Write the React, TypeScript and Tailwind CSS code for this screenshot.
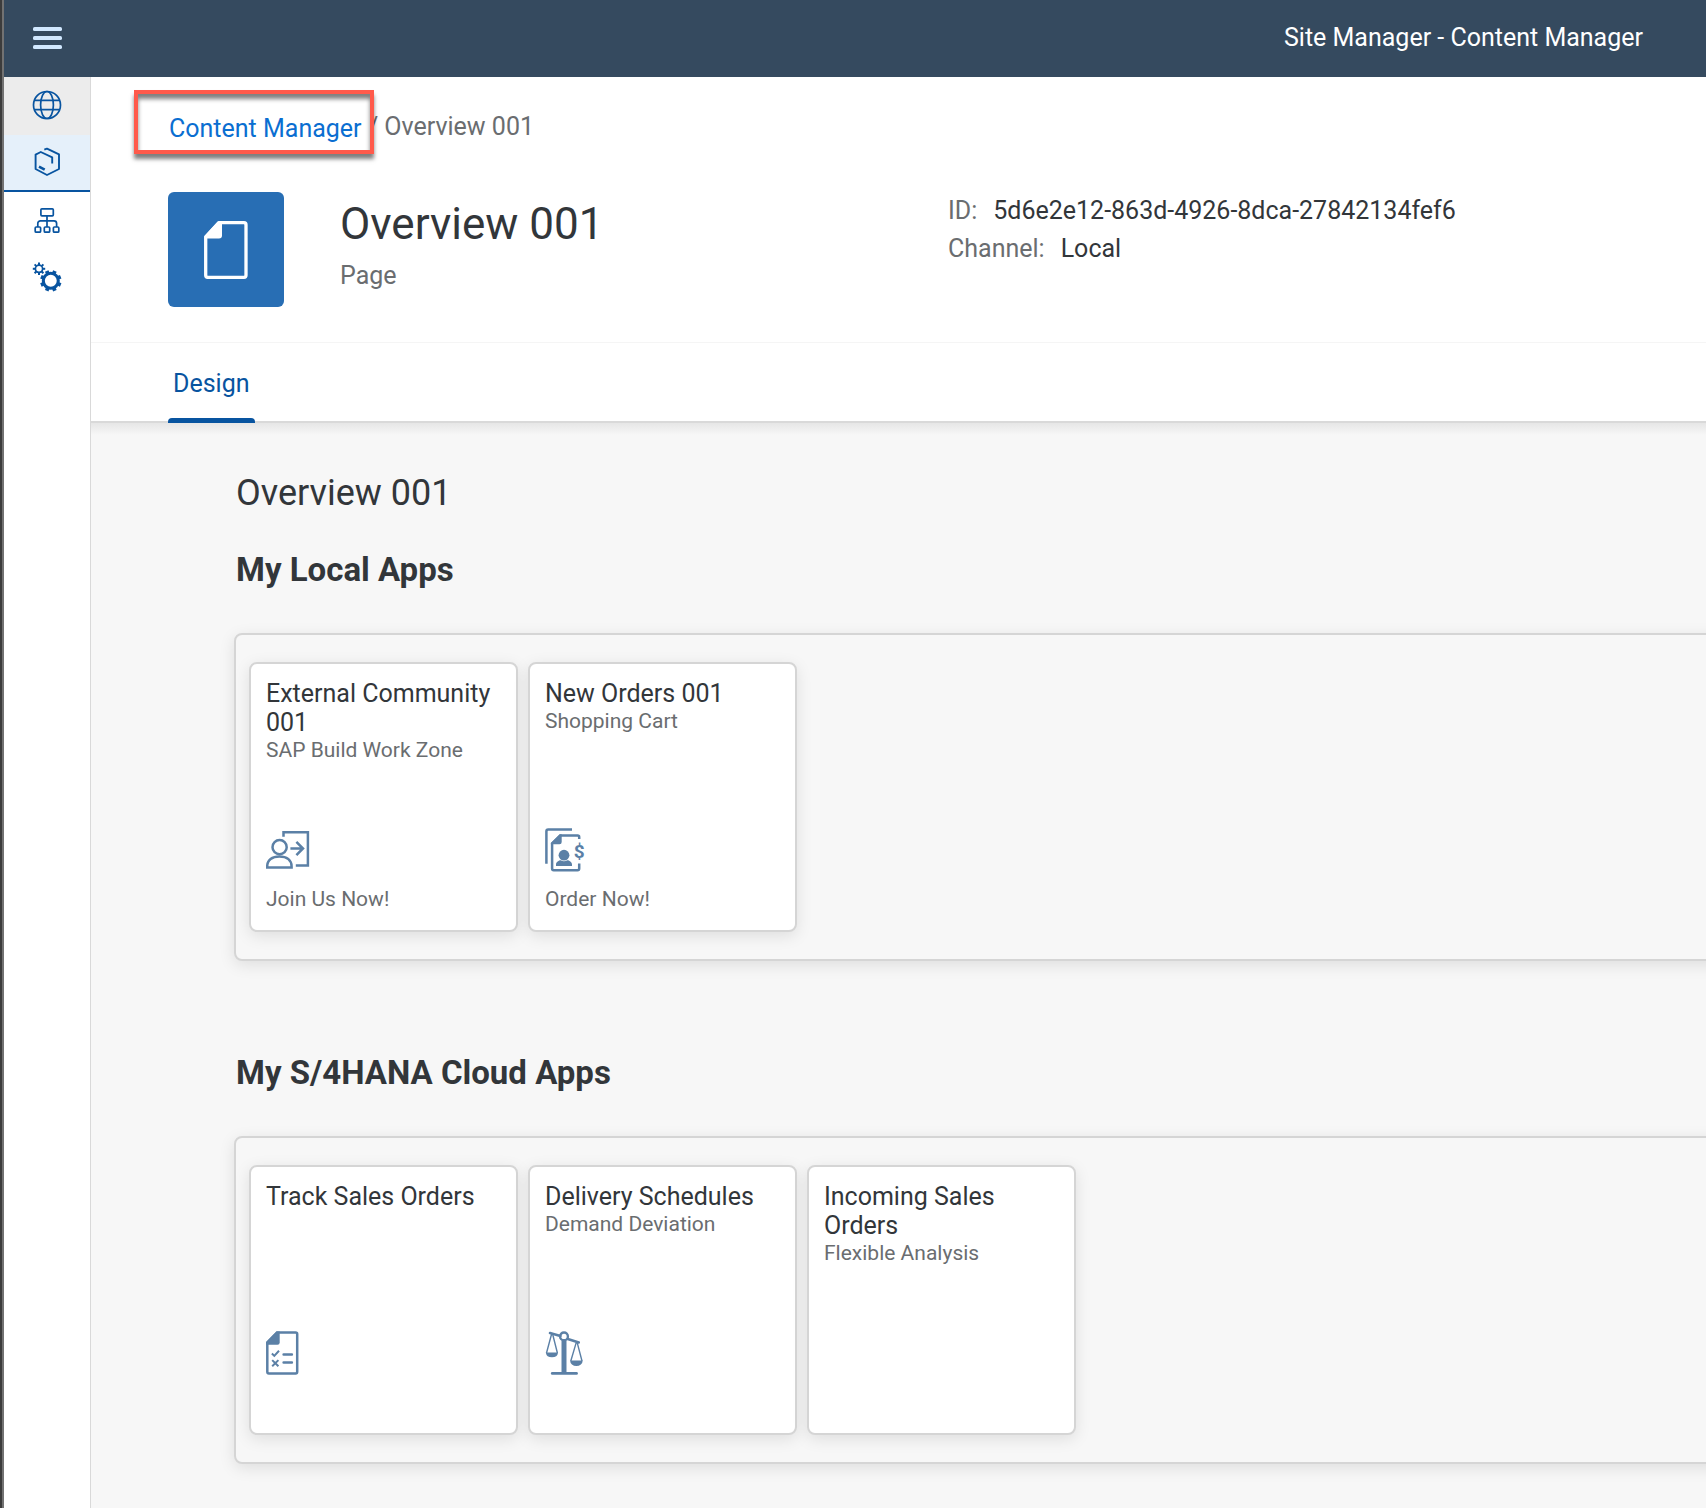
import type { ReactNode } from "react";

function MenuIcon() {
  return (
    <svg width="30" height="24" viewBox="0 0 30 24" fill="#d1e8ff" aria-hidden="true">
      <rect x="1" y="1" width="29" height="4" rx="1.6" />
      <rect x="1" y="10" width="29" height="4" rx="1.6" />
      <rect x="1" y="19" width="29" height="4" rx="1.6" />
    </svg>
  );
}

function GlobeIcon() {
  return (
    <svg width="30" height="30" viewBox="0 0 30 30" fill="none" stroke="#0854a0" strokeWidth="1.7" aria-hidden="true">
      <circle cx="15" cy="15" r="13.5" />
      <ellipse cx="15" cy="15" rx="6.4" ry="13.5" />
      <path d="M2.2 10.3H27.8M2.2 19.6H27.8" />
    </svg>
  );
}

function ContentIcon() {
  return (
    <svg width="30" height="30" viewBox="0 0 30 30" fill="none" stroke="#0854a0" strokeWidth="1.9" aria-hidden="true">
      <path d="M12.3 2.6 L15 1.6 L27 7.4 V22 L15 28 L3.6 22 V7.6 L8.8 5 L20.2 10.3 V16.4" strokeLinejoin="round" />
      <path d="M7 19.6 L12.7 22.6" strokeWidth="2.6" />
    </svg>
  );
}

function HierarchyIcon() {
  return (
    <svg width="30" height="30" viewBox="0 0 30 30" fill="none" stroke="#0854a0" strokeWidth="1.7" aria-hidden="true">
      <rect x="8.9" y="3.8" width="12.4" height="7" rx="1" />
      <path d="M15 11V22M5.8 22V18.4a2.6 2.6 0 0 1 2.6-2.6H22a2.6 2.6 0 0 1 2.6 2.6V22" />
      <rect x="3.2" y="22" width="5.4" height="5.2" rx="1" />
      <rect x="12.3" y="22" width="5.4" height="5.2" rx="1" />
      <rect x="21.4" y="22" width="5.4" height="5.2" rx="1" />
    </svg>
  );
}

function GearsIcon() {
  const teeth = [0, 45, 90, 135, 180, 225, 270, 315];
  return (
    <svg width="30" height="30" viewBox="0 0 30 30" aria-hidden="true">
      <g stroke="#0854a0" fill="none">
        <circle cx="7" cy="6.8" r="3.6" strokeWidth="1.7" />
        {teeth.map((a) => (
          <path key={a} d="M7 3V.6" strokeWidth="2" transform={`rotate(${a} 7 6.8)`} />
        ))}
        <circle cx="18.8" cy="18.8" r="7.5" strokeWidth="3.1" />
        {teeth.map((a) => (
          <path key={a} d="M18.8 11V8.1" strokeWidth="3.8" transform={`rotate(${a + 22.5} 18.8 18.8)`} />
        ))}
      </g>
    </svg>
  );
}

function PageIcon() {
  return (
    <svg width="44" height="58" viewBox="0 0 44 58" aria-hidden="true">
      <path d="M14.8 1.7H40a2 2 0 0 1 2 2V54.3a2 2 0 0 1-2 2H3.7a2 2 0 0 1-2-2V15.8Z" fill="none" stroke="#fff" strokeWidth="3.3" strokeLinejoin="round" />
      <path d="M14 .5H18V14.5a3 3 0 0 1-3 3H.6V15Z" fill="#fff" />
    </svg>
  );
}

function JoinIcon() {
  return (
    <svg width="44" height="44" viewBox="0 0 44 44" fill="none" stroke="#5b80a6" strokeWidth="2.5" aria-hidden="true">
      <circle cx="13.6" cy="19.2" r="7.1" />
      <path d="M1.2 39.6V38.4C1.2 32 6.2 28.4 13.4 28.4S25.6 32 25.6 38.4V39.6Z" />
      <path d="M17.5 8.8V4.2H41.9V37.4H29.8" />
      <path d="M24.4 20.5H36.5M30.4 13.9L37 20.5L30.4 27.1" />
    </svg>
  );
}

function SalesDocumentIcon() {
  return (
    <svg width="44" height="44" viewBox="0 0 44 44" fill="none" stroke="#5b80a6" strokeWidth="2.5" aria-hidden="true">
      <path d="M1.4 35.8V3.4A1.8 1.8 0 0 1 3.2 1.6H27" />
      <path d="M34.2 11V9A1.6 1.6 0 0 0 32.6 7.4H15.4L7.1 15.6V40.6A1.6 1.6 0 0 0 8.7 42.2H32.6A1.6 1.6 0 0 0 34.2 40.6V35.6" />
      <path d="M14.6 6.2H16.7V14A2.2 2.2 0 0 1 14.5 16.2H5.9V15Z" fill="#5b80a6" stroke="none" />
      <circle cx="19" cy="27.2" r="5.4" fill="#5b80a6" stroke="none" />
      <path d="M11 38.1V36.6C11 34 14 32.3 15.6 32.3Q19 34.4 22.4 32.3C24 32.3 27 34 27 36.6V38.1Z" fill="#5b80a6" stroke="none" />
      <text x="34.3" y="30" textAnchor="middle" fontFamily="Roboto, sans-serif" fontSize="19" fontWeight="700" fill="#5b80a6" stroke="none">$</text>
    </svg>
  );
}

function ChecklistIcon() {
  return (
    <svg width="44" height="44" viewBox="0 0 44 44" fill="none" stroke="#5b80a6" strokeWidth="2.5" aria-hidden="true">
      <path d="M11 1.5H29.6A1.6 1.6 0 0 1 31.2 3.1V40.8A1.6 1.6 0 0 1 29.6 42.4H2.9A1.6 1.6 0 0 1 1.3 40.8V11.4Z" />
      <path d="M10.6 .4H13.7V11.6A2.2 2.2 0 0 1 11.5 13.8H.1V11Z" fill="#5b80a6" stroke="none" />
      <path d="M5.9 22.5L8.3 24.9L13 19.8M6.2 29.1L12.4 35.3M12.4 29.1L6.2 35.3" strokeWidth="2" />
      <path d="M17.6 23.4H25.9M17.6 31.4H25.9" strokeLinecap="round" />
    </svg>
  );
}

function ScaleIcon() {
  return (
    <svg width="44" height="44" viewBox="0 0 44 44" fill="none" stroke="#5b80a6" aria-hidden="true">
      <circle cx="19" cy="5.4" r="3.9" strokeWidth="2.4" />
      <path d="M5 2.1L15.4 4.9M22.8 8.1L33.8 11.4" strokeWidth="2.6" strokeLinecap="round" />
      <path d="M19 9.4V42" strokeWidth="5" />
      <path d="M7.2 42.4H31.6" strokeWidth="2.6" strokeLinecap="round" />
      <path d="M6.6 3L1.5 22M7.6 3L12.4 22M31.2 11.6L25.8 30M32.2 11.6L37 30" strokeWidth="1.4" />
      <path d="M.8 21.4H13.1A6.2 5.6 0 0 1 .8 21.4ZM25.1 29.6H37.7A6.3 5.4 0 0 1 25.1 29.6Z" fill="#5b80a6" stroke="none" />
    </svg>
  );
}

type App = { title: string; subtitle?: string; footer?: string; icon?: ReactNode };

const groups: { name: string; apps: App[] }[] = [
  {
    name: "My Local Apps",
    apps: [
      { title: "External Community 001", subtitle: "SAP Build Work Zone", footer: "Join Us Now!", icon: <JoinIcon /> },
      { title: "New Orders 001", subtitle: "Shopping Cart", footer: "Order Now!", icon: <SalesDocumentIcon /> },
    ],
  },
  {
    name: "My S/4HANA Cloud Apps",
    apps: [
      { title: "Track Sales Orders", icon: <ChecklistIcon /> },
      { title: "Delivery Schedules", subtitle: "Demand Deviation", icon: <ScaleIcon /> },
      { title: "Incoming Sales Orders", subtitle: "Flexible Analysis" },
    ],
  },
];

function Tile({ title, subtitle, footer, icon }: App) {
  return (
    <a
      href="#"
      className="flex h-[270px] w-[269px] shrink-0 flex-col rounded-lg border-2 border-[#d5d5d5] bg-white px-[15px] pt-[15px] pb-[18px] shadow-[0_4px_16px_rgba(0,0,0,0.10)]"
    >
      <h3 className="text-[25px] leading-[29px] text-[#32363a]">{title}</h3>
      <p className="text-[21px] leading-[26px] text-[#6a6d70]">{subtitle}</p>
      <div className="mt-auto h-11">{icon}</div>
      <p className="mt-3.5 h-[26px] text-[21px] leading-[26px] text-[#6a6d70]">{footer}</p>
    </a>
  );
}

function SideItem({ label, className, children }: { label: string; className: string; children: ReactNode }) {
  return (
    <button type="button" aria-label={label} className={`flex w-full items-center justify-center pb-0.5 ${className}`}>
      {children}
    </button>
  );
}

export default function App() {
  return (
    <div className="flex min-h-screen overflow-hidden border-l-2 border-[#3c3c3c] bg-white font-[Roboto,sans-serif] text-[25px] leading-8">
      <div className="flex min-w-0 flex-1 flex-col border-l-2 border-[#727272]">
        <header className="flex h-[77px] items-center justify-between bg-[#354a5f] pr-[63px] pb-0.5 pl-7">
          <button type="button" aria-label="Menu">
            <MenuIcon />
          </button>
          <div className="text-white">Site Manager - Content Manager</div>
        </header>

        <div className="flex flex-1">
          <aside className="w-[87px] shrink-0 border-r border-[#d9d9d9] bg-white">
            <SideItem label="Site Directory" className="h-[58px] bg-[#ececec]">
              <GlobeIcon />
            </SideItem>
            <SideItem label="Content Manager" className="h-[57px] border-b-2 border-[#0854a0] bg-[#e5f0fa]">
              <ContentIcon />
            </SideItem>
            <SideItem label="Channel Manager" className="h-[57px]">
              <HierarchyIcon />
            </SideItem>
            <SideItem label="Settings" className="h-[57px]">
              <GearsIcon />
            </SideItem>
          </aside>

          <main className="flex min-w-0 flex-1 flex-col">
            <section className="border-b border-[#f5f5f5] pt-[13px] pb-[35px]">
              <nav aria-label="Breadcrumb" className="flex items-center pl-[43px]">
                <div className="relative z-10 flex h-16 w-60 items-center border-4 border-[#ff5a4b] bg-white pt-3.5 pl-[31px] shadow-[0_5px_4px_rgba(0,0,0,0.5),inset_0_5px_4px_rgba(0,0,0,0.5)]">
                  <a href="#" className="whitespace-nowrap text-[#0a6ed1]">
                    Content Manager
                  </a>
                </div>
                <span className="-ml-1.5 pt-2.5 text-[#6a6d70]">/</span>
                <span className="pt-2.5 pl-1.5 text-[#6a6d70]">Overview 001</span>
              </nav>

              <div className="mt-[38px] flex pl-[77px]">
                <div className="flex h-[115px] w-[116px] shrink-0 items-center justify-center rounded-md bg-[#286eb4]">
                  <PageIcon />
                </div>
                <div className="ml-14 w-[608px] pt-1">
                  <h1 className="text-[44px] leading-[56px] text-[#32363a]">Overview 001</h1>
                  <p className="mt-2 text-[#6a6d70]">Page</p>
                </div>
                <dl className="leading-[38px]">
                  <div className="flex gap-4">
                    <dt className="text-[#6a6d70]">ID:</dt>
                    <dd className="whitespace-nowrap text-[#32363a]">5d6e2e12-863d-4926-8dca-27842134fef6</dd>
                  </div>
                  <div className="flex gap-4">
                    <dt className="text-[#6a6d70]">Channel:</dt>
                    <dd className="text-[#32363a]">Local</dd>
                  </div>
                </dl>
              </div>
            </section>

            <div role="tablist" className="flex h-20 border-b-2 border-[#d9d9d9] bg-white pl-[77px]">
              <button type="button" role="tab" aria-selected="true" className="relative -mb-0.5 h-20 px-[5px] pt-0.5 text-[#0854a0]">
                Design
                <span className="absolute inset-x-0 bottom-0 h-[5px] rounded-t bg-[#0854a0]" />
              </button>
            </div>

            <section className="flex-1 overflow-hidden bg-[#f7f7f7] pb-11 pl-[143px]">
              <div className="-ml-[143px] h-3 bg-linear-to-b from-[#e6e6e6] to-[#f7f7f7]" />
              <h2 className="mt-[38px] pl-0.5 text-[36px] leading-10 text-[#32363a]">Overview 001</h2>
              <div className="mt-[37px] flex flex-col gap-[92px]">
                {groups.map((group) => (
                  <section key={group.name}>
                    <h2 className="pl-0.5 text-[33px] leading-10 font-bold text-[#32363a]">{group.name}</h2>
                    <div className="mt-[43px] -mr-5 flex gap-2.5 rounded-lg border-2 border-[#d5d5d5] bg-[#f7f7f7] py-[27px] pl-[13px] shadow-[0_4px_16px_rgba(0,0,0,0.10)]">
                      {group.apps.map((app) => (
                        <Tile key={app.title} {...app} />
                      ))}
                    </div>
                  </section>
                ))}
              </div>
            </section>
          </main>
        </div>
      </div>
    </div>
  );
}
